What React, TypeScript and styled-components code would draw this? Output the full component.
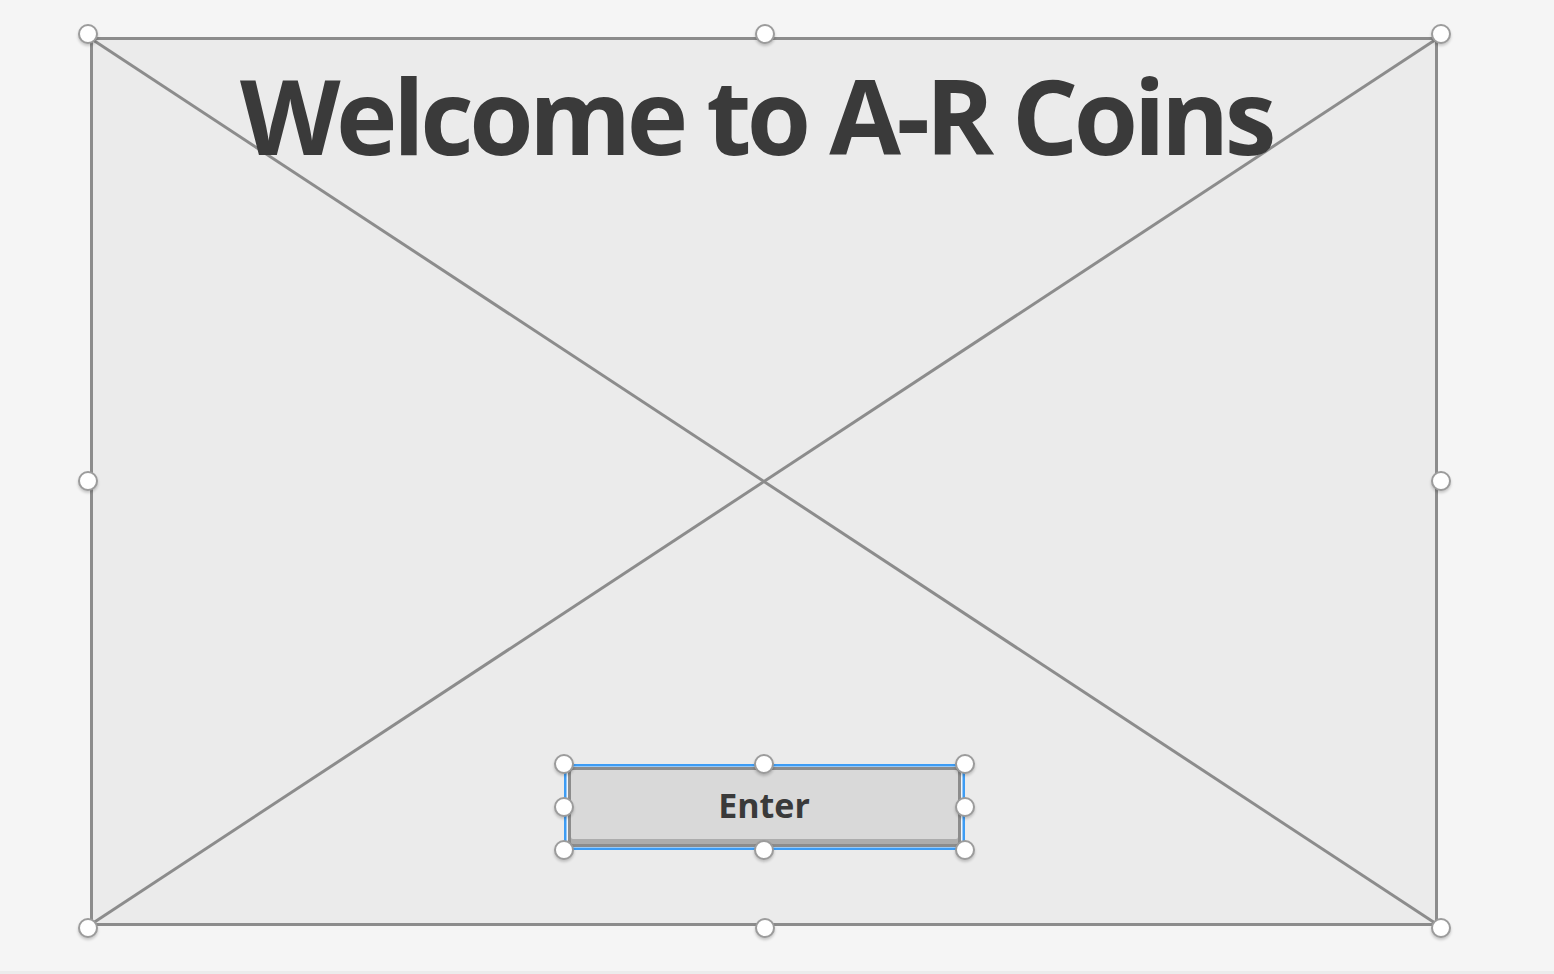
import React from "react";
import styled, { createGlobalStyle } from "styled-components";

const GlobalStyle = createGlobalStyle`
  html, body {
    margin: 0;
    padding: 0;
    background: #f5f5f5;
  }
  body {
    font-family: "Open Sans", "Noto Sans", sans-serif;
  }
`;

const Page = styled.div`
  width: 1554px;
  height: 974px;
  box-sizing: border-box;
  padding: 34px 0 0 88px;
  border-bottom: 3px solid #ececec;
  background: #f5f5f5;
`;

const ImageSelection = styled.div`
  position: relative;
  box-sizing: border-box;
  width: 1353px;
  height: 894px;
  padding: 3px 3px 2px 2px;
`;

const Frame = styled.div`
  position: relative;
  box-sizing: border-box;
  width: 100%;
  height: 100%;
  border: 3px solid #8c8c8c;
  background: #ebebeb;
  display: flex;
  flex-direction: column;
  align-items: center;
  justify-content: space-between;
  padding: 13px 0 73px;
`;

const Cross = styled.svg`
  position: absolute;
  inset: 0;
  width: 100%;
  height: 100%;
`;

const Title = styled.h1`
  position: relative;
  margin: 0 16px 0 0;
  font-size: 104px;
  font-weight: 700;
  line-height: 1.2;
  letter-spacing: -4.5px;
  color: #3a3a3a;
`;

const ButtonSelection = styled.div`
  position: relative;
  box-sizing: border-box;
  width: 401px;
  height: 86px;
  padding: 3px 4px;
  background: #f1f6fc;
  box-shadow: inset 0 0 0 2.5px #3d9cf4;
`;

const Button = styled.button`
  display: block;
  box-sizing: border-box;
  width: 100%;
  height: 100%;
  border: 3px solid #8c8c8c;
  border-radius: 5px;
  background: #d9d9d9;
  box-shadow: inset 0 -5px 0 #adadad;
  font-family: "Open Sans", "Noto Sans", sans-serif;
  font-size: 34px;
  font-weight: 700;
  color: #3a3a3a;
  padding: 0 0 4px;
  cursor: pointer;
`;

const Handle = styled.span<{ $x: number; $y: number }>`
  position: absolute;
  left: ${({ $x }) => $x}%;
  top: ${({ $y }) => $y}%;
  width: 16px;
  height: 16px;
  border-radius: 50%;
  background: #ffffff;
  border: 2px solid #9c9c9c;
  box-shadow: 0 2px 3px rgba(0, 0, 0, 0.2);
  transform: translate(-50%, -50%);
  z-index: 2;
`;

const handlePoints: [number, number][] = [
  [0, 0],
  [50, 0],
  [100, 0],
  [0, 50],
  [100, 50],
  [0, 100],
  [50, 100],
  [100, 100],
];

const Handles: React.FC = () => (
  <>
    {handlePoints.map(([x, y]) => (
      <Handle key={`${x}-${y}`} $x={x} $y={y} />
    ))}
  </>
);

export default function App() {
  return (
    <>
      <GlobalStyle />
      <Page>
        <ImageSelection>
          <Frame>
            <Cross viewBox="0 0 100 100" preserveAspectRatio="none">
              <line x1="0" y1="0" x2="100" y2="100" stroke="#8c8c8c" strokeWidth="3" vectorEffect="non-scaling-stroke" />
              <line x1="100" y1="0" x2="0" y2="100" stroke="#8c8c8c" strokeWidth="3" vectorEffect="non-scaling-stroke" />
            </Cross>
            <Title>Welcome to A-R Coins</Title>
            <ButtonSelection>
              <Button>Enter</Button>
              <Handles />
            </ButtonSelection>
          </Frame>
          <Handles />
        </ImageSelection>
      </Page>
    </>
  );
}
